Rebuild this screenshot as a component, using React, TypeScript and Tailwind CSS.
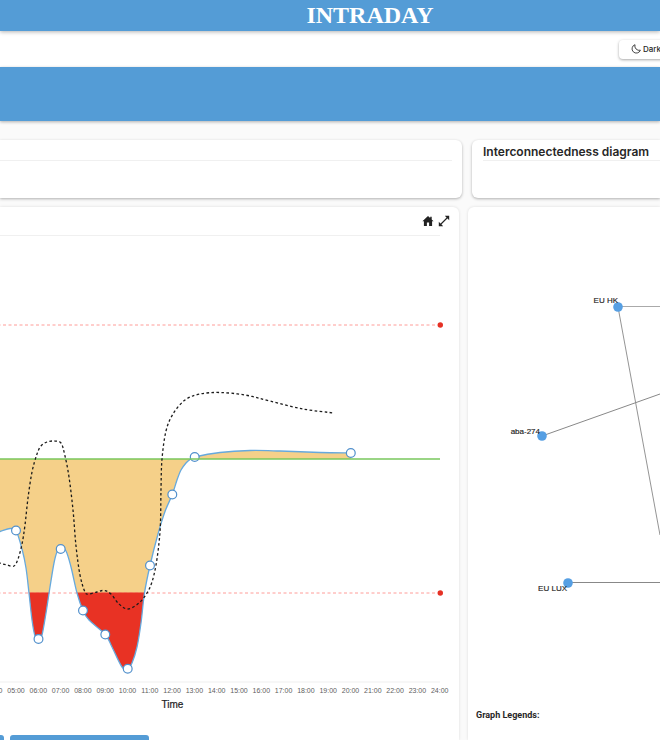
type Point = [number, number];

const BASELINE = 223;
const UPPER_LIMIT = 89;
const LOWER_LIMIT = 357;
const FIRST_HOUR = 4;
const HOUR_STEP = 22.3;

const hourX = (hour: number) => 16 + (hour - 5) * HOUR_STEP;

const readings: Point[] = [
  [16, 294.5], [38.5, 403], [60.7, 313], [83, 374.5], [105.3, 398.5],
  [127.7, 432.7], [150, 329.5], [172.3, 258.5], [194.7, 221], [350.8, 217],
];

const balanceLine: Point[] = [
  [-10, 298], [0, 295.5], [10, 292.5], [16, 294.5], [22, 313], [26, 332], [29, 357],
  [32, 384], [35, 400], [38.5, 403], [42, 399], [46, 377], [50, 351], [54, 327],
  [57, 316], [60.7, 312], [66, 315], [71, 331], [77, 357], [83, 374.5], [89, 384],
  [105.3, 398.5], [112, 411], [122, 431], [127.7, 432.7], [132, 427], [137, 411],
  [141, 387], [144.5, 357], [150, 329.5], [158, 298], [165, 275.5], [172.3, 258.5],
  [177, 244], [181, 234], [186, 227], [190, 223.5], [194.7, 221], [220, 216.5],
  [250, 214.5], [280, 215], [320, 216.5], [350.8, 217],
];

const forecastLine: Point[] = [
  [-6, 324], [0, 327], [7, 329], [14, 330], [18, 323], [22, 308], [25, 289],
  [28, 262], [32, 236], [37, 218], [41, 210], [47, 206], [54, 205], [61, 207],
  [65, 220], [69, 241], [73, 274], [76, 310], [80, 339], [85, 356], [89, 358],
  [97, 356], [104, 354.5], [111, 358], [119, 368], [128, 373], [139, 367],
  [147, 357], [152, 346], [156, 329], [159, 307], [160.5, 286], [161, 253],
  [162, 223], [166, 195], [173, 178], [185, 164], [200, 158], [220, 156.5],
  [245, 159], [270, 165], [303, 173], [334, 177],
];

// Catmull-Rom spline expressed as cubic segments
function smooth(points: Point[]) {
  let d = `M${points[0][0]} ${points[0][1]}`;
  for (let i = 0; i < points.length - 1; i++) {
    const a = points[Math.max(i - 1, 0)];
    const b = points[i];
    const c = points[i + 1];
    const e = points[Math.min(i + 2, points.length - 1)];
    d += ` C${b[0] + (c[0] - a[0]) / 6} ${b[1] + (c[1] - a[1]) / 6} ${c[0] - (e[0] - b[0]) / 6} ${c[1] - (e[1] - b[1]) / 6} ${c[0]} ${c[1]}`;
  }
  return d;
}

function BalanceChart() {
  const line = smooth(balanceLine);
  const area = `${line} L350.8 ${BASELINE} L-10 ${BASELINE} Z`;
  const hours = Array.from({ length: 21 }, (_, i) => FIRST_HOUR + i);
  return (
    <svg
      viewBox="0 0 459 499"
      className="block w-full shrink-0 font-['Liberation_Sans',Arial,sans-serif]"
      role="img"
      aria-label="Intraday balance by hour"
    >
      <clipPath id="within"><rect x="0" y="0" width="459" height={LOWER_LIMIT} /></clipPath>
      <clipPath id="breach"><rect x="0" y={LOWER_LIMIT - 0.5} width="459" height="112" /></clipPath>
      <path d={area} fill="#f5d089" clipPath="url(#within)" />
      {[UPPER_LIMIT, LOWER_LIMIT].map((y) => (
        <g key={y}>
          <line x1="0" x2="440" y1={y} y2={y} stroke="#ff9c98" strokeDasharray="3 2.5" strokeDashoffset="-3" />
          <circle cx="440.3" cy={y} r="2.7" fill="#e53125" />
        </g>
      ))}
      <path d={area} fill="#e83224" clipPath="url(#breach)" />
      <path d={line} fill="none" stroke="#66a9dd" strokeWidth="1.3" />
      {readings.map(([x, y]) => (
        <circle key={x} cx={x} cy={y} r="4.4" fill="#fff" stroke="#5190cc" strokeWidth="1.2" />
      ))}
      <line x1="0" x2="440" y1={BASELINE} y2={BASELINE} stroke="#79c75c" strokeWidth="1.5" />
      <path d={smooth(forecastLine)} fill="none" stroke="#1b1b1b" strokeWidth="1.3" strokeDasharray="2.6 2.4" />
      <line x1="0" x2="440" y1="446" y2="446" stroke="#efefef" />
      {hours.map((h) => (
        <text key={h} x={hourX(h)} y="457" textAnchor="middle" fontSize="7" fill="#606060">
          {`${String(h).padStart(2, "0")}:00`}
        </text>
      ))}
      <text x="172.5" y="472" textAnchor="middle" fontSize="10" fill="#222" stroke="#222" strokeWidth=".2">Time</text>
    </svg>
  );
}

const accounts = [
  { name: "EU HK", x: 150, y: 100, labelX: 150, labelY: 96 },
  { name: "aba-274", x: 74, y: 229, labelX: 72, labelY: 227 },
  { name: "EU LUX", x: 100, y: 376, labelX: 99, labelY: 384 },
];

function NetworkDiagram() {
  return (
    <svg
      viewBox="0 0 192 500"
      className="block w-full shrink-0 font-['Liberation_Sans',Arial,sans-serif]"
      role="img"
      aria-label="Account connections"
    >
      <g stroke="#888" fill="none">
        <path d="M150 99.5H192" stroke="#aaa" />
        <path d="M150 100L192 328" strokeWidth=".9" />
        <path d="M74 229L192 187" />
        <path d="M100 375.5H192" strokeWidth="1.2" />
      </g>
      {accounts.map((a) => (
        <g key={a.name}>
          <circle cx={a.x} cy={a.y} r="4.8" fill="#569fe3" />
          <text x={a.labelX} y={a.labelY} textAnchor="end" fontSize="8" fill="#222" stroke="#222" strokeWidth=".15">{a.name}</text>
        </g>
      ))}
    </svg>
  );
}

export default function App() {
  return (
    <div className="flex h-screen flex-col overflow-hidden bg-[#fafafa] font-[Inter,sans-serif] text-[#272727]">
      <header className="relative z-10 flex h-[31px] shrink-0 items-center justify-center bg-[#549cd6] pl-20 shadow-[0_1px_4px_rgba(0,0,0,0.3)]">
        <h1 className="font-['Liberation_Serif',serif] text-[24px] leading-[31px] font-bold text-white">INTRADAY</h1>
      </header>
      <nav className="flex h-9 shrink-0 items-center justify-end bg-white">
        <button type="button" className="-mr-2 flex h-[19px] w-[49px] items-center gap-[2px] rounded-[4px] bg-white pl-3 text-[8px] font-medium whitespace-nowrap shadow-[0_1px_3px_rgba(0,0,0,0.35)]">
          <svg width="10" height="10" viewBox="0 0 10 10" fill="none" stroke="#333" strokeWidth=".9" strokeLinejoin="round" className="shrink-0">
            <path d="M4 .7A4.3 4.3 0 1 0 9.4 6.2 4.4 4.4 0 0 1 4 .7Z" />
          </svg>
          Dark
        </button>
      </nav>
      <div className="h-[54px] shrink-0 bg-[#549cd6] shadow-[0_1px_3px_rgba(0,0,0,0.3)]" />

      <main className="flex min-h-0 flex-1 flex-col gap-[9px] pt-[19px]">
        <div className="grid h-[58px] shrink-0 grid-cols-[462fr_188fr] gap-[10px]">
          <section className="rounded-r-[6px] bg-white pt-5 pr-[10px] shadow-[0_1px_3px_rgba(0,0,0,0.3)]">
            <hr className="border-[#f0f0f0]" />
          </section>
          <section className="rounded-l-[6px] bg-white pl-[11px] shadow-[0_1px_3px_rgba(0,0,0,0.3)]">
            <h2 className="h-5 pt-1 text-[12px] leading-[16px] font-semibold whitespace-nowrap">Interconnectedness diagram</h2>
            <hr className="border-[#f0f0f0]" />
          </section>
        </div>

        <div className="grid min-h-0 flex-1 grid-cols-[459fr_192fr] gap-[9px]">
          <section className="flex min-h-0 flex-col overflow-hidden rounded-tr-[6px] bg-white shadow-[0_0_3px_rgba(0,0,0,0.12)]">
            <div className="flex h-7 shrink-0 items-center justify-end gap-1 pr-[9px]">
              <button type="button" aria-label="Reset view">
                <svg width="12" height="12" viewBox="0 0 12 12" fill="#222">
                  <path d="M6 1 .4 6.3h1.5V11h3V7.6h2.2V11h3V6.3h1.5L9.7 4.4V1.8H8.2V3z" />
                </svg>
              </button>
              <button type="button" aria-label="Expand chart">
                <svg width="12" height="12" viewBox="0 0 12 12" fill="#222">
                  <path d="M2 10 10 2" stroke="#222" strokeWidth="1.1" />
                  <path d="M6.8.8h4.4v4.4L9.8 3.8 8.2 2.2ZM5.2 11.2H.8V6.8l1.4 1.4 1.6 1.6Z" />
                </svg>
              </button>
            </div>
            <hr className="mr-[19px] shrink-0 border-[#f0f0f0]" />
            <BalanceChart />
            <div className="flex h-6 shrink-0 gap-[6px]">
              <button type="button" aria-label="Previous series" className="w-1 rounded-tr-[3px] bg-[#549cd6]" />
              <button type="button" aria-label="Selected series" className="w-[139px] rounded-[3px] bg-[#549cd6]" />
            </div>
          </section>
          <section className="flex min-h-0 flex-col overflow-hidden rounded-tl-[6px] bg-white shadow-[0_0_3px_rgba(0,0,0,0.12)]">
            <NetworkDiagram />
            <h3 className="shrink-0 pl-2 font-[Roboto,sans-serif] text-[9px] leading-4 font-bold">Graph Legends:</h3>
          </section>
        </div>
      </main>
    </div>
  );
}
